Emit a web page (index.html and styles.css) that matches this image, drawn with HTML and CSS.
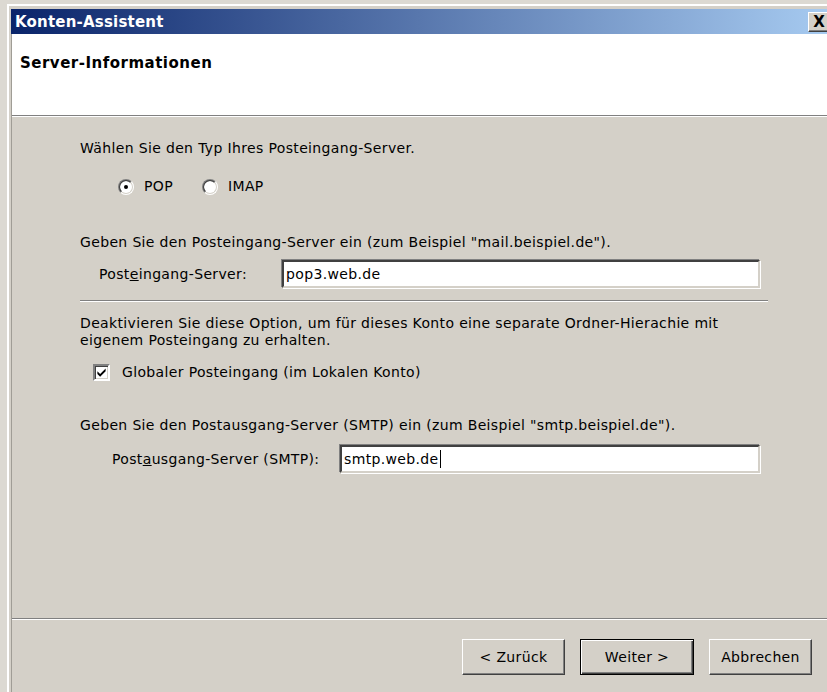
FILE: index.html
```html
<!DOCTYPE html>
<html lang="de">
<head>
<meta charset="utf-8">
<title>Konten-Assistent</title>
<link rel="stylesheet" href="styles.css">
</head>
<body>
<div class="frame">
  <div class="frame-edge">
    <div class="titlebar">
      <span class="title">Konten-Assistent</span>
      <span class="close">X</span>
    </div>
    <div class="dialog">
      <div class="header">
        <h1 class="header-title">Server-Informationen</h1>
      </div>
      <div class="rule"></div>
      <div class="content">
        <p class="text intro">Wählen Sie den Typ Ihres Posteingang-Server.</p>
        <div class="radios">
          <span class="option"><span class="radio checked"></span>POP</span>
          <span class="option"><span class="radio"></span>IMAP</span>
        </div>
        <p class="text gap-lg">Geben Sie den Posteingang-Server ein (zum Beispiel "mail.beispiel.de").</p>
        <div class="field field-in">
          <span class="label">Post<u>e</u>ingang-Server:</span>
          <span class="input">pop3.web.de</span>
        </div>
        <div class="rule rule-inset"></div>
        <p class="text gap-sm">Deaktivieren Sie diese Option, um für dieses Konto eine separate Ordner-Hierachie mit<br>eigenem Posteingang zu erhalten.</p>
        <div class="check-row">
          <span class="checkbox">
            <svg viewBox="0 0 12 12" width="11" height="11"><path d="M1.5 4.5 L4.5 7.5 L10.5 1.5 L10.5 4.5 L4.5 10.5 L1.5 7.5 Z" fill="#000"/></svg>
          </span>
          <span>Globaler Posteingang (im Lokalen Konto)</span>
        </div>
        <p class="text gap-out">Geben Sie den Postausgang-Server (SMTP) ein (zum Beispiel "smtp.beispiel.de").</p>
        <div class="field field-out">
          <span class="label">Post<u>a</u>usgang-Server (SMTP):</span>
          <span class="input">smtp.web.de<span class="caret"></span></span>
        </div>
      </div>
      <div class="rule"></div>
      <div class="footer">
        <button class="btn" type="button">&lt; Zurück</button>
        <button class="btn btn-default" type="button">Weiter &gt;</button>
        <button class="btn" type="button">Abbrechen</button>
      </div>
    </div>
  </div>
</div>
</body>
</html>
```

FILE: styles.css
```css
* { box-sizing: border-box; }

body {
  margin: 0;
  width: 827px;
  height: 692px;
  overflow: hidden;
  background: #d4d0c8;
  color: #000;
  font-family: "DejaVu Sans", "Liberation Sans", sans-serif;
  font-size: 14px;
  letter-spacing: 0.35px;
}

/* window frame */
.frame {
  height: 692px;
  padding: 4px 0 0 7px;
  background: #dcd9d2;
}

.frame-edge {
  height: 100%;
  display: flex;
  flex-direction: column;
  border-top: 2px solid #fff;
  border-left: 2px solid #fff;
  padding: 3px 0 0 2px;
  background: #d4d0c8;
}

.titlebar {
  flex: none;
  height: 25px;
  display: flex;
  align-items: center;
  justify-content: space-between;
  padding-left: 4px;
  background: linear-gradient(to right, #0a246a, #a6caf0);
  color: #fff;
  font-weight: bold;
  font-size: 15px;
  letter-spacing: 0.2px;
  overflow: hidden;
}

.close {
  width: 21px;
  height: 20px;
  margin-right: -2px;
  display: flex;
  align-items: center;
  justify-content: center;
  background: #d4d0c8;
  color: #000;
  font-size: 15px;
  font-weight: bold;
  letter-spacing: 0;
  border-top: 1px solid #fff;
  border-left: 1px solid #fff;
  border-bottom: 1px solid #404040;
  box-shadow: inset 0 -1px #808080;
}

.dialog {
  flex: 1;
  display: flex;
  flex-direction: column;
  border-left: 1px solid #a09d96;
}

.header {
  height: 81px;
  background: #fff;
  padding: 20px 0 0 8px;
}

.header-title {
  margin: 0;
  font-size: 15px;
  font-weight: bold;
  letter-spacing: 0.5px;
  line-height: 18px;
}

.rule {
  flex: none;
  height: 2px;
  border-top: 1px solid #808080;
  border-bottom: 1px solid #fff;
}

.content {
  flex: 1;
  padding: 23px 0 0 68px;
  width: 756px;
}

.text {
  margin: 0;
  line-height: 17px;
  white-space: nowrap;
}

.radios {
  display: flex;
  margin: 21px 0 0 38px;
  line-height: 17px;
}

.option {
  display: flex;
  align-items: center;
  width: 84px;
}

.radio {
  position: relative;
  width: 16px;
  height: 16px;
  margin-right: 10px;
  border-radius: 50%;
  border: 2px solid;
  border-color: #808080 #fff #fff #808080;
  background: #fff;
}

.radio::before {
  content: "";
  position: absolute;
  inset: -1px;
  border-radius: 50%;
  border: 1px solid;
  border-color: #404040 #d4d0c8 #d4d0c8 #404040;
}

.radio.checked::after {
  content: "";
  position: absolute;
  left: 4px;
  top: 4px;
  width: 4px;
  height: 4px;
  border-radius: 50%;
  background: #000;
}

.gap-lg { margin-top: 39px; }
.gap-sm { margin-top: 13px; }
.gap-out { margin-top: 36px; }

.field {
  display: flex;
  align-items: center;
  margin-right: 8px;
}

.field-in { margin-top: 9px; margin-left: 19px; }
.field-in .label { width: 183px; }
.field-out { margin-top: 11px; margin-left: 32px; }
.field-out .label { width: 228px; }

.label { flex: none; }

.input {
  flex: 1;
  height: 28px;
  display: flex;
  align-items: center;
  padding-left: 2px;
  background: #fff;
  border-top: 2px solid #404040;
  border-left: 2px solid #404040;
  border-bottom: 2px solid #d4d0c8;
  border-right: 2px solid #d4d0c8;
  box-shadow: -1px -1px 0 #808080, 1px 1px 0 #fff;
}

.caret {
  display: inline-block;
  width: 1px;
  height: 18px;
  margin-left: 1px;
  background: #000;
}

.rule-inset {
  margin: 12px 0 0 0;
  width: 688px;
}

.check-row {
  display: flex;
  align-items: center;
  margin: 15px 0 0 13px;
  line-height: 17px;
}

.checkbox {
  width: 17px;
  height: 17px;
  margin-right: 12px;
  display: flex;
  align-items: center;
  justify-content: center;
  background: #fff;
  border: 2px solid;
  border-color: #808080 #fff #fff #808080;
  box-shadow: inset 1px 1px 0 #404040, inset -1px -1px 0 #d4d0c8;
}

.footer {
  flex: none;
  height: 72px;
  display: flex;
  justify-content: flex-end;
  align-items: flex-start;
  gap: 15px;
  padding: 19px 15px 0 0;
}

.btn {
  width: 103px;
  height: 36px;
  padding: 0;
  font: inherit;
  letter-spacing: inherit;
  color: #000;
  background: #d4d0c8;
  border: 1px solid;
  border-color: #fff #404040 #404040 #fff;
  box-shadow: inset -1px -1px 0 #808080;
}

.btn-default {
  width: 114px;
  border: 1px solid #000;
  box-shadow: inset 1px 1px 0 #fff, inset -1px -1px 0 #404040, inset -2px -2px 0 #808080;
}
```
